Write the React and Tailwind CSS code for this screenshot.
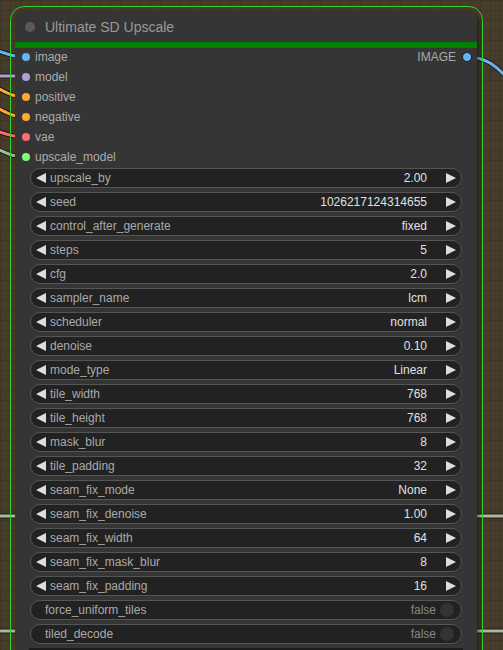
import React from 'react';

const inputs = [
  { name: 'image', dot: 'bg-[#64b5f6]' },
  { name: 'model', dot: 'bg-[#b39ddb]' },
  { name: 'positive', dot: 'bg-[#ffa931]' },
  { name: 'negative', dot: 'bg-[#ffa931]' },
  { name: 'vae', dot: 'bg-[#ff6e6e]' },
  { name: 'upscale_model', dot: 'bg-[#7cff7c]' },
];

const widgets = [
  ['upscale_by', '2.00'],
  ['seed', '1026217124314655'],
  ['control_after_generate', 'fixed'],
  ['steps', '5'],
  ['cfg', '2.0'],
  ['sampler_name', 'lcm'],
  ['scheduler', 'normal'],
  ['denoise', '0.10'],
  ['mode_type', 'Linear'],
  ['tile_width', '768'],
  ['tile_height', '768'],
  ['mask_blur', '8'],
  ['tile_padding', '32'],
  ['seam_fix_mode', 'None'],
  ['seam_fix_denoise', '1.00'],
  ['seam_fix_width', '64'],
  ['seam_fix_mask_blur', '8'],
  ['seam_fix_padding', '16'],
];

const toggles = ['force_uniform_tiles', 'tiled_decode'];

// wires drawn behind the node
const wires = [
  { d: 'M -30 44 C 0 48, 5 57, 25 57', c: '#64b5f6' },
  { d: 'M -10 76 L 25 76', c: '#b39ddb' },
  { d: 'M -30 80 C 0 84, 5 97, 25 97', c: '#ffa931' },
  { d: 'M -30 100 C 0 104, 5 117, 25 117', c: '#ffa931' },
  { d: 'M -30 125 C 0 129, 5 137, 25 137', c: '#ff6e6e' },
  { d: 'M -30 141 C 0 146, 5 157, 25 157', c: '#9fb89f' },
  { d: 'M 466 57 C 486 57, 495 64, 515 86', c: '#64b5f6' },
  { d: 'M -10 516 L 520 516', c: '#a9baa4' },
  { d: 'M -10 631 L 520 631', c: '#a9baa4' },
];

function Arrow({ dir }) {
  return (
    <svg width="10" height="10" viewBox="0 0 10 10" className="shrink-0">
      {dir === 'left' ? (
        <polygon points="10,0 0,5 10,10" fill="#dddddd" />
      ) : (
        <polygon points="0,0 10,5 0,10" fill="#dddddd" />
      )}
    </svg>
  );
}

function NumberWidget({ label, value }) {
  return (
    <div className="h-[20px] rounded-full border border-[#555] bg-[#222] flex items-center pl-[5px] pr-[5px] text-[12px]">
      <Arrow dir="left" />
      <span className="ml-[4px] text-[#aaa] whitespace-nowrap">{label}</span>
      <span className="ml-auto text-[#e0e0e0] whitespace-nowrap">{value}</span>
      <span className="ml-[19px] flex">
        <Arrow dir="right" />
      </span>
    </div>
  );
}

function ToggleWidget({ label }) {
  return (
    <div className="h-[20px] rounded-full border border-[#555] bg-[#222] flex items-center pl-[14px] pr-[7px] text-[12px]">
      <span className="text-[#aaa] whitespace-nowrap">{label}</span>
      <span className="ml-auto text-[#888]">false</span>
      <span className="ml-[4px] w-[14px] h-[14px] rounded-full bg-[#333]"></span>
    </div>
  );
}

export default function App() {
  return (
    <div className="relative w-[503px] h-[650px] overflow-hidden bg-[#463c29] bg-[linear-gradient(#3e3524_1px,transparent_1px),linear-gradient(90deg,#3e3524_1px,transparent_1px)] [background-size:10px_10px] font-['Liberation_Sans',Arial,sans-serif] pt-[6px] pl-[10px]">
      <svg className="absolute inset-0" width="503" height="650">
        {wires.map((w, i) => (
          <g key={i} fill="none">
            <path d={w.d} stroke="rgba(0,0,0,0.55)" strokeWidth="5" />
            <path d={w.d} stroke={w.c} strokeWidth="3" />
          </g>
        ))}
      </svg>

      {/* selection outline */}
      <div className="relative z-10 w-[473px] border border-[#2fd12f] rounded-[14px] pt-[5px] pl-[4px] pr-[5px] pb-[20px]">
        <div className="w-[462px] rounded-[8px] bg-[#353535] shadow-[2px_2px_4px_rgba(0,0,0,0.5)] pb-[30px]">
          <div className="h-[30px] flex items-center pl-[10px]">
            <span className="w-[10px] h-[10px] rounded-full bg-[#5a5a5a]"></span>
            <span className="ml-[10px] text-[14px] text-[#999]">Ultimate SD Upscale</span>
          </div>
          <div className="h-[6px] bg-[#008000]"></div>

          <div className="flex -mt-px">
            <div className="flex flex-col">
              {inputs.map((inp) => (
                <div key={inp.name} className="h-[20px] flex items-center pl-[7px]">
                  <span className={`w-[8px] h-[8px] rounded-full ${inp.dot}`}></span>
                  <span className="ml-[5px] text-[12px] text-[#aaa]">{inp.name}</span>
                </div>
              ))}
            </div>
            <div className="ml-auto h-[20px] flex items-center pr-[5px]">
              <span className="text-[12px] text-[#aaa]">IMAGE</span>
              <span className="ml-[6px] w-[10px] h-[10px] rounded-full bg-[#64b5f6] border border-[#222]"></span>
            </div>
          </div>

          <div className="mt-[1px] flex flex-col gap-[4px] px-[15px]">
            {widgets.map(([l, v]) => (
              <NumberWidget key={l} label={l} value={v} />
            ))}
            {toggles.map((t) => (
              <ToggleWidget key={t} label={t} />
            ))}
            <div className="h-[20px] -mx-px bg-[#1c1c1c]"></div>
          </div>
        </div>
      </div>
    </div>
  );
}
